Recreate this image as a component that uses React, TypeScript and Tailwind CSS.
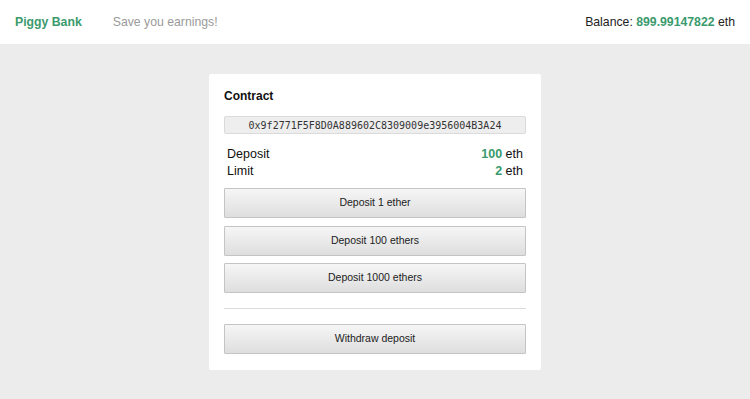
const buttons = ["Deposit 1 ether", "Deposit 100 ethers", "Deposit 1000 ethers"];

function ActionButton({ label }: { label: string }) {
  return (
    <button className="h-[30px] w-full rounded-[1px] border border-[#c4c4c4] bg-gradient-to-b from-[#f6f6f6] to-[#dedede] text-[10.5px] text-[#222]">
      {label}
    </button>
  );
}

export default function App() {
  return (
    <div className="min-h-[399px] bg-[#ececec] font-['Liberation_Sans',Arial,sans-serif]">
      <header className="flex h-[44px] items-center bg-white px-[15px] text-[12.25px]">
        <span className="font-bold text-[#3a9a6d]">Piggy Bank</span>
        <span className="ml-[31px] text-[#9a9a9a]">Save you earnings!</span>
        <span className="ml-auto text-[#222]">
          Balance: <span className="font-bold text-[#3a9a6d]">899.99147822</span> eth
        </span>
      </header>

      <main className="flex justify-center pt-[30px]">
        <section className="w-[332px] rounded-[2px] bg-white px-[15px] pb-[16px] pt-[15px]">
          <h2 className="text-[12px] font-bold leading-[14px] text-[#111]">Contract</h2>
          <div className="mt-[13px] flex h-[18px] items-center justify-center rounded-[2px] border border-[#dadada] bg-[#eeeeee] font-['DejaVu_Sans_Mono',monospace] text-[10px] text-[#333]">
            0x9f2771F5F8D0A889602C8309009e3956004B3A24
          </div>

          <div className="mt-[12px] px-[3px] text-[12.5px] leading-[17px] text-[#111]">
            <div className="flex justify-between">
              <span>Deposit</span>
              <span>
                <span className="font-bold text-[#3a9a6d]">100</span> eth
              </span>
            </div>
            <div className="flex justify-between">
              <span>Limit</span>
              <span>
                <span className="font-bold text-[#3a9a6d]">2</span> eth
              </span>
            </div>
          </div>

          <div className="mt-[8px] flex flex-col gap-[7.5px]">
            {buttons.map((b) => (
              <ActionButton key={b} label={b} />
            ))}
          </div>

          <hr className="my-[15px] border-t border-[#dcdcdc]" />

          <ActionButton label="Withdraw deposit" />
        </section>
      </main>
    </div>
  );
}
